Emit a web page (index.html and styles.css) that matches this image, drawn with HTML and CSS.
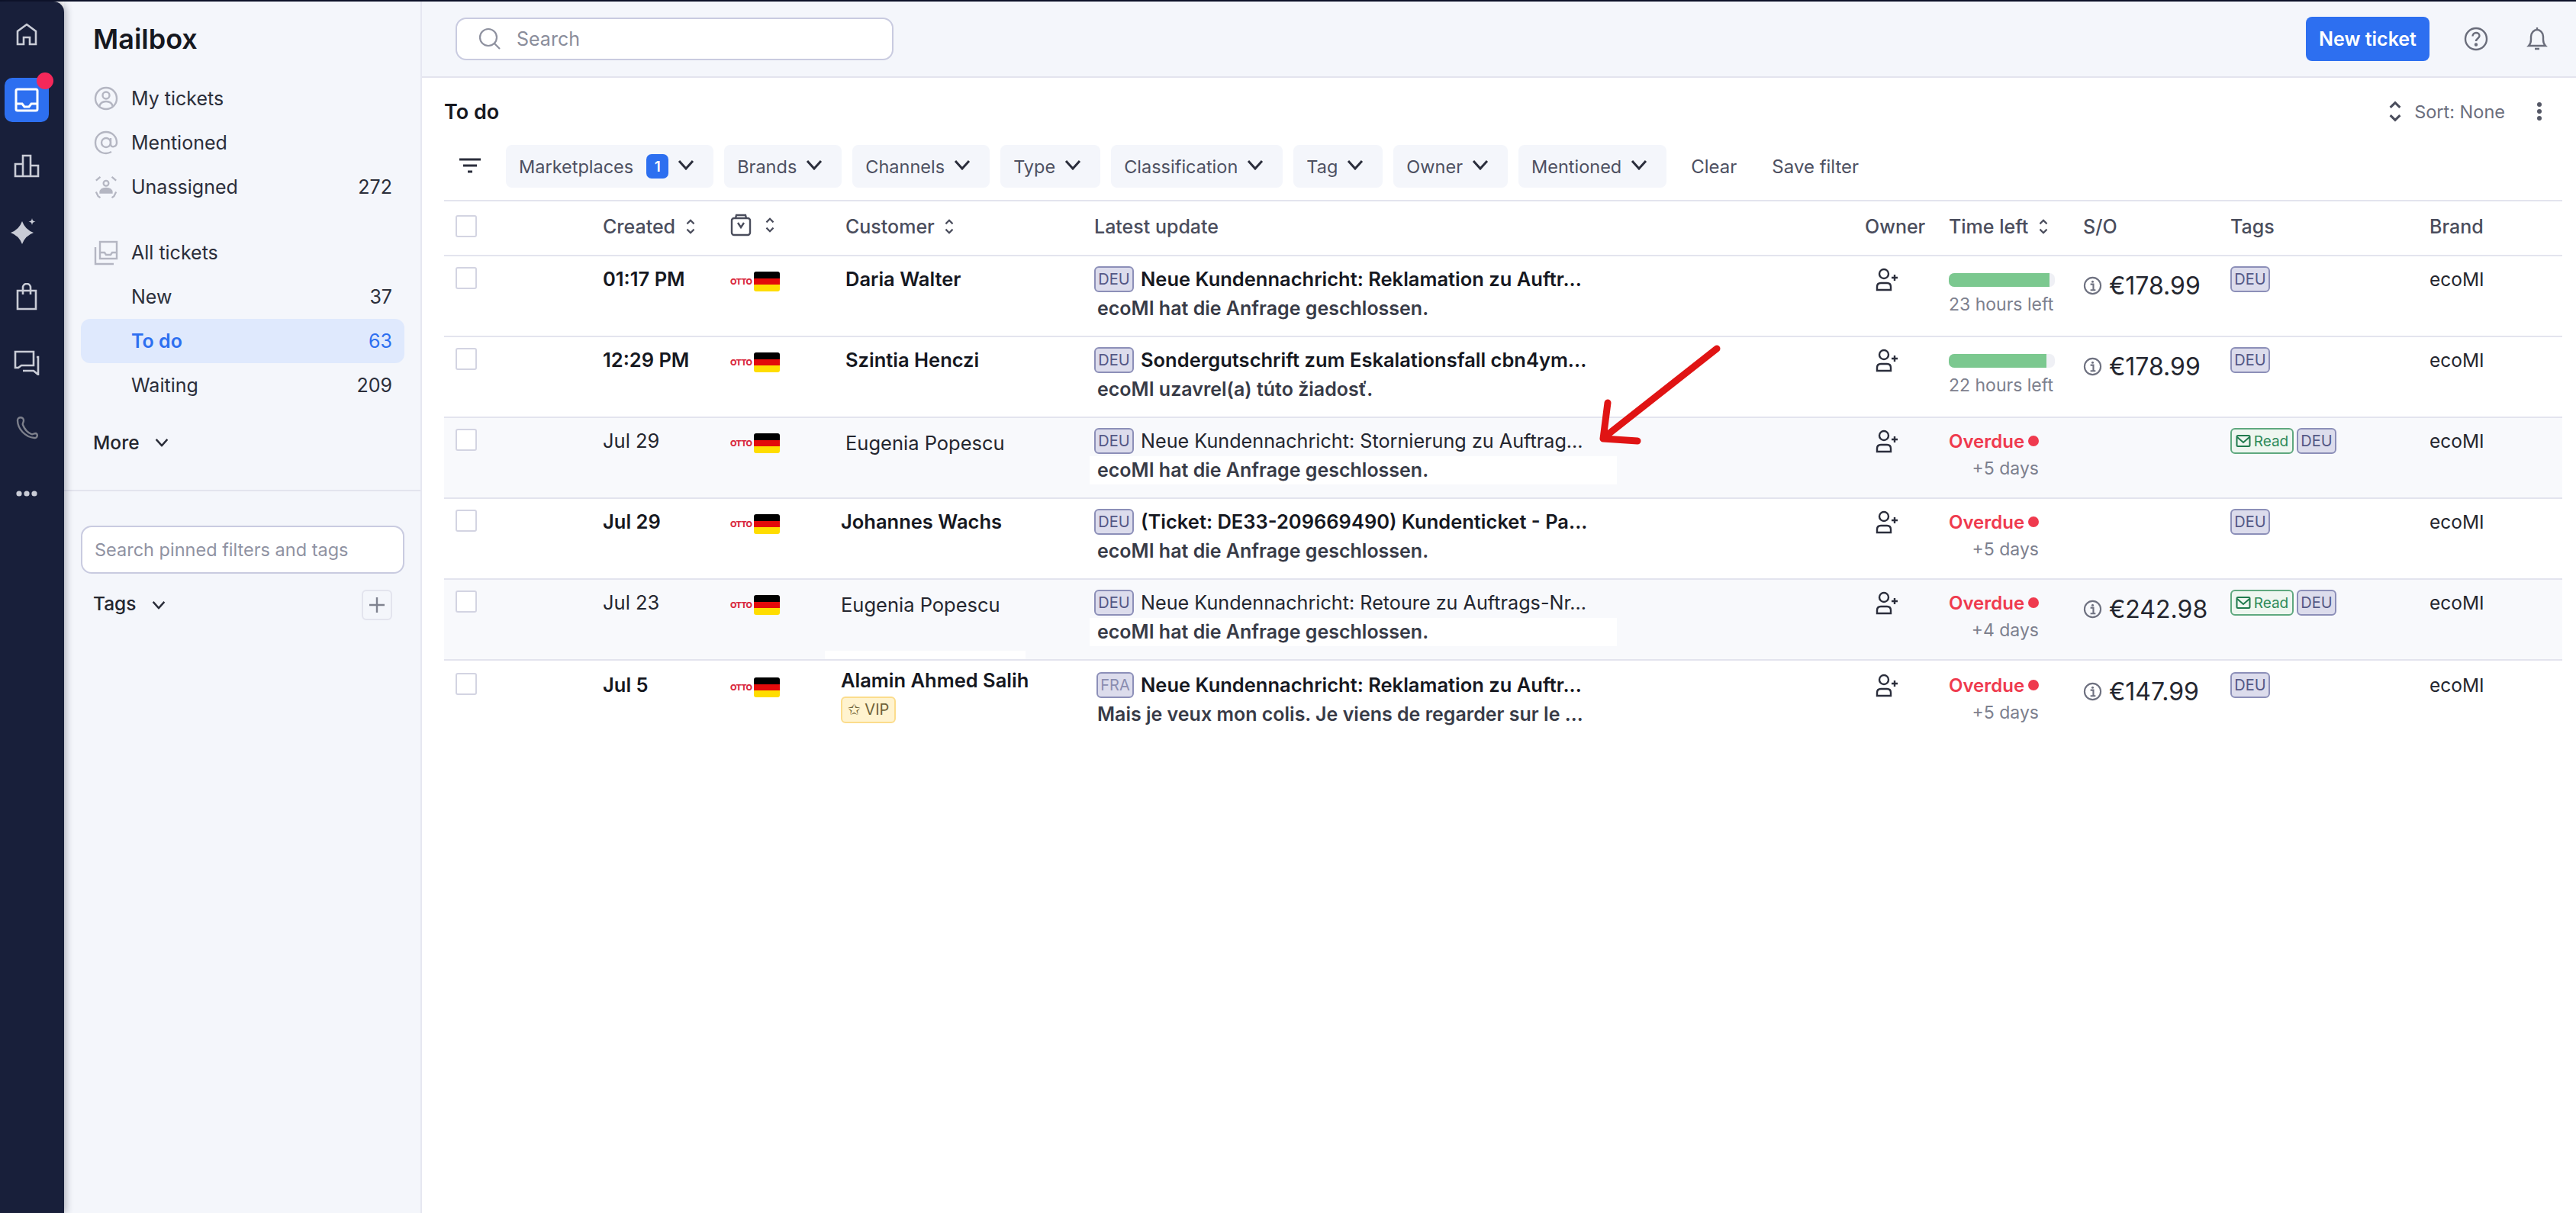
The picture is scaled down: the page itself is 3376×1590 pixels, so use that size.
FILE: index.html
```html
<!DOCTYPE html>
<html lang="en">
<head>
    <meta charset="UTF-8">
    <title>Mailbox</title>
    <link rel="stylesheet" href="styles.css">
</head>
<body>
    <svg class="sprites" width="0" height="0">
        <symbol id="chev" viewBox="0 0 22 14"><path d="M2 2l9 10 9-10" fill="none" stroke="currentColor" stroke-width="3"/></symbol>
        <symbol id="sort" viewBox="0 0 14 22"><path d="M2 7l5-5 5 5M2 15l5 5 5-5" fill="none" stroke="currentColor" stroke-width="2.4"/></symbol>
        <symbol id="user-plus" viewBox="0 0 32 32"><g fill="none" stroke="#2b2e3c" stroke-width="2.4"><circle cx="12" cy="8" r="6"/><path d="M3 29v-4c0-3 2-5 5-5h8c3 0 5 2 5 5v4z"/><path d="M26 9v8M22 13h8"/></g></symbol>
        <symbol id="info" viewBox="0 0 26 26"><circle cx="13" cy="13" r="11" fill="none" stroke="#6e7180" stroke-width="2.2"/><path d="M10 11h4v7M10 19h7" fill="none" stroke="#6e7180" stroke-width="2.2"/><circle cx="13" cy="7.5" r="1.6" fill="#6e7180"/></symbol>
        <symbol id="mail-check" viewBox="0 0 20 20"><rect x="1.5" y="3" width="17" height="14" rx="1.5" fill="none" stroke="#1f7a4d" stroke-width="2"/><path d="M2 5l8 7 8-7" fill="none" stroke="#1f7a4d" stroke-width="2"/></symbol>
    </svg>

    <div class="app">
        <nav class="rail">
            <a class="rail-item">
                <svg width="30" height="32" viewBox="0 0 30 32" fill="none" stroke="currentColor" stroke-width="2.6"><path d="M3 29V12L15 3l12 9v17h-8v-9h-8v9z"/></svg>
            </a>
            <a class="rail-item active">
                <span class="rail-btn">
                    <svg width="32" height="32" viewBox="0 0 32 32" fill="none" stroke="#fff" stroke-width="3"><rect x="2" y="2" width="28" height="28" rx="2"/><path d="M2 21h8l3 4h6l3-4h8"/></svg>
                    <span class="rail-dot"></span>
                </span>
            </a>
            <a class="rail-item">
                <svg width="34" height="32" viewBox="0 0 34 32" fill="none" stroke="currentColor" stroke-width="2.6"><path d="M2 30V14h10v16zM12 30V3h10v27zM22 30V16h10v14z"/></svg>
            </a>
            <a class="rail-item sparkle">
                <svg width="34" height="34" viewBox="0 0 34 34" fill="currentColor"><path d="M15 4Q19 15 30 19 19 23 15 34 11 23 0 19 11 15 15 4z"/><path d="M28 0c.5 3 1.500 4 4.500 4.500-3 .5-4 1.500-4.500 4.500-.5-3-1.500-4-4.500-4.500 3-.5 4-1.500 4.500-4.500z"/></svg>
            </a>
            <a class="rail-item">
                <svg width="28" height="36" viewBox="0 0 28 36" fill="none" stroke="currentColor" stroke-width="2.600"><path d="M2 10h24v24H2z"/><path d="M9 15V6a5 5 0 0 1 10 0v9"/></svg>
            </a>
            <a class="rail-item">
                <svg width="34" height="34" viewBox="0 0 34 34" fill="none" stroke="currentColor" stroke-width="2.600"><path d="M2 3h24v18H10l-4 3H2z"/><path d="M30 10h2v23l-6-5H12"/></svg>
            </a>
            <a class="rail-item dim">
                <svg width="30" height="32" viewBox="0 0 30 32" fill="none" stroke="currentColor" stroke-width="2.400"><path d="M3 6c0-5 8-5 8 0 0 3-2 4-1 6 2 5 6 10 11 12 2 1 3-1 6-1 3 1 2 7-2 6C13 28 3 17 3 6z"/></svg>
            </a>
            <a class="rail-item">
                <svg width="30" height="10" viewBox="0 0 30 10" fill="currentColor"><circle cx="5" cy="5" r="3.600"/><circle cx="15" cy="5" r="3.600"/><circle cx="25" cy="5" r="3.600"/></svg>
            </a>
        </nav>

        <aside class="sidebar">
            <h1 class="side-title">Mailbox</h1>
            <div class="side-item">
                <svg class="side-icon" viewBox="0 0 32 34" fill="none" stroke="#b4b6c2" stroke-width="2.400"><circle cx="16" cy="17" r="14"/><circle cx="16" cy="13" r="4.500"/><path d="M7 28c1-5 5-7 9-7s8 2 9 7"/></svg>
                <span>My tickets</span>
            </div>
            <div class="side-item">
                <svg class="side-icon" viewBox="0 0 32 34" fill="none" stroke="#b4b6c2" stroke-width="2.400"><circle cx="16" cy="17" r="6"/><path d="M22 11v8c0 5 8 4 8-2 0-8-6-14-14-14S2 9 2 17s6 14 14 14c3 0 5-1 7-2"/></svg>
                <span>Mentioned</span>
            </div>
            <div class="side-item">
                <svg class="side-icon" viewBox="0 0 34 34" fill="none" stroke="#b4b6c2" stroke-width="2.400"><path d="M9 3L3 8M25 3l6 5M3 24l3 6 3 2M31 24l-3 6-3 2"/><circle cx="17" cy="12" r="3.600"/><path d="M9 25c0-5 3-6 8-6s8 1 8 6z" fill="#b4b6c2"/></svg>
                <span>Unassigned</span>
                <span class="side-count">272</span>
            </div>
            <div class="side-item side-gap">
                <svg class="side-icon" viewBox="0 0 32 34" fill="none" stroke="#b4b6c2" stroke-width="2.400"><rect x="8" y="3" width="22" height="22"/><path d="M8 17h6l2 3h6l2-3h6"/><path d="M2 10v22h24"/></svg>
                <span>All tickets</span>
            </div>
            <div class="side-item side-sub"><span>New</span><span class="side-count">37</span></div>
            <div class="side-item side-sub current"><span>To do</span><span class="side-count">63</span></div>
            <div class="side-item side-sub"><span>Waiting</span><span class="side-count">209</span></div>
            <div class="side-toggle side-more">
                <span>More</span>
                <svg class="side-chev" viewBox="0 0 22 14"><use href="#chev"/></svg>
            </div>
            <div class="side-divider"></div>
            <div class="side-search">Search pinned filters and tags</div>
            <div class="side-toggle side-tags">
                <span class="side-tags-label">Tags</span>
                <svg class="side-chev" viewBox="0 0 22 14"><use href="#chev"/></svg>
                <span class="side-plus">
                    <svg width="22" height="22" viewBox="0 0 22 22" stroke="#7f828f" stroke-width="2.400"><path d="M11 1v20M1 11h20"/></svg>
                </span>
            </div>
        </aside>

        <main class="main">
            <header class="topbar">
                <div class="search">
                    <svg width="30" height="30" viewBox="0 0 30 30" fill="none" stroke="#8e919f" stroke-width="2.200"><circle cx="13" cy="13" r="11"/><path d="M21 21l7 7"/></svg>
                    <span>Search</span>
                </div>
                <button class="new-ticket">New ticket</button>
                <svg class="top-help" width="32" height="32" viewBox="0 0 32 32" fill="none" stroke="#6a6d7b" stroke-width="2.400"><circle cx="16" cy="16" r="14"/><path d="M11.500 12.500c0-6 9-6 9-.5 0 3-4.500 3.500-4.500 7"/><circle cx="16" cy="23.500" r="1" fill="#6a6d7b"/></svg>
                <svg class="top-bell" width="28" height="32" viewBox="0 0 28 32" fill="none" stroke="#6a6d7b" stroke-width="2.400"><path d="M3 25c2-2 3-4 3-8v-4c0-5 4-9 8-9s8 4 8 9v4c0 4 1 6 3 8z"/><path d="M14 1v3M11 29h6"/></svg>
            </header>

            <section class="content">
                <div class="heading">
                    <h2>To do</h2>
                    <div class="sort">
                        <svg width="18" height="28" viewBox="0 0 14 22" color="#4a4d5c"><use href="#sort"/></svg>
                        <span>Sort: None</span>
                    </div>
                    <svg class="more-v" width="8" height="26" viewBox="0 0 8 26" fill="#555866"><circle cx="4" cy="4" r="3"/><circle cx="4" cy="13" r="3"/><circle cx="4" cy="22" r="3"/></svg>
                </div>

                <div class="filters">
                    <svg class="filter-icon" width="28" height="22" viewBox="0 0 28 22" stroke="#2b2e3c" stroke-width="3"><path d="M0 2h28M5 10h18M11 18h6"/></svg>
                    <div class="chip">Marketplaces <b class="chip-count">1</b><svg class="chip-chev" viewBox="0 0 22 14"><use href="#chev"/></svg></div>
                    <div class="chip">Brands<svg class="chip-chev" viewBox="0 0 22 14"><use href="#chev"/></svg></div>
                    <div class="chip">Channels<svg class="chip-chev" viewBox="0 0 22 14"><use href="#chev"/></svg></div>
                    <div class="chip">Type<svg class="chip-chev" viewBox="0 0 22 14"><use href="#chev"/></svg></div>
                    <div class="chip">Classification<svg class="chip-chev" viewBox="0 0 22 14"><use href="#chev"/></svg></div>
                    <div class="chip">Tag<svg class="chip-chev" viewBox="0 0 22 14"><use href="#chev"/></svg></div>
                    <div class="chip">Owner<svg class="chip-chev" viewBox="0 0 22 14"><use href="#chev"/></svg></div>
                    <div class="chip">Mentioned<svg class="chip-chev" viewBox="0 0 22 14"><use href="#chev"/></svg></div>
                    <span class="filter-link">Clear</span>
                    <span class="filter-link">Save filter</span>
                </div>

                <div class="table">
                    <div class="table-head">
                        <span class="check"></span>
                        <span class="th">Created <svg class="th-sort" viewBox="0 0 14 22"><use href="#sort"/></svg></span>
                        <span class="th th-shop">
                            <svg width="28" height="30" viewBox="0 0 28 30" fill="none" stroke="#4a4d5c" stroke-width="2.400"><rect x="2" y="6" width="24" height="22" rx="3"/><path d="M7 6l1-4h12l1 4M10 12l4 6 4-6"/></svg>
                            <svg class="th-sort" viewBox="0 0 14 22"><use href="#sort"/></svg>
                        </span>
                        <span class="th">Customer <svg class="th-sort" viewBox="0 0 14 22"><use href="#sort"/></svg></span>
                        <span class="th">Latest update</span>
                        <span class="th">Owner</span>
                        <span class="th">Time left <svg class="th-sort" viewBox="0 0 14 22"><use href="#sort"/></svg></span>
                        <span class="th">S/O</span>
                        <span class="th">Tags</span>
                        <span class="th">Brand</span>
                    </div>

                    <div class="row unread">
                        <span class="check"></span>
                        <span class="created">01:17 PM</span>
                        <span class="market"><span class="otto">otto</span><span class="flag"></span></span>
                        <span class="customer">Daria Walter</span>
                        <div class="update">
                            <div class="subject"><span class="badge">DEU</span><span class="subject-text">Neue Kundennachricht: Reklamation zu Auftr...</span></div>
                            <div class="snippet">ecoMI hat die Anfrage geschlossen.</div>
                        </div>
                        <svg class="owner" viewBox="0 0 32 32"><use href="#user-plus"/></svg>
                        <div class="time">
                            <div class="progress"><span class="progress-fill" style="width:95%"></span></div>
                            <div class="time-left">23 hours left</div>
                        </div>
                        <div class="so"><svg class="info" viewBox="0 0 26 26"><use href="#info"/></svg>€178.99</div>
                        <div class="tags"><span class="badge">DEU</span></div>
                        <span class="brand">ecoMI</span>
                    </div>

                    <div class="row unread">
                        <span class="check"></span>
                        <span class="created">12:29 PM</span>
                        <span class="market"><span class="otto">otto</span><span class="flag"></span></span>
                        <span class="customer">Szintia Henczi</span>
                        <div class="update">
                            <div class="subject"><span class="badge">DEU</span><span class="subject-text">Sondergutschrift zum Eskalationsfall cbn4ym...</span></div>
                            <div class="snippet">ecoMI uzavrel(a) túto žiadosť.</div>
                        </div>
                        <svg class="owner" viewBox="0 0 32 32"><use href="#user-plus"/></svg>
                        <div class="time">
                            <div class="progress"><span class="progress-fill" style="width:92%"></span></div>
                            <div class="time-left">22 hours left</div>
                        </div>
                        <div class="so"><svg class="info" viewBox="0 0 26 26"><use href="#info"/></svg>€178.99</div>
                        <div class="tags"><span class="badge">DEU</span></div>
                        <span class="brand">ecoMI</span>
                    </div>

                    <div class="row read">
                        <span class="check"></span>
                        <span class="created">Jul 29</span>
                        <span class="market"><span class="otto">otto</span><span class="flag"></span></span>
                        <span class="customer lower">Eugenia Popescu</span>
                        <div class="update">
                            <div class="subject"><span class="badge">DEU</span><span class="subject-text">Neue Kundennachricht: Stornierung zu Auftrag...</span></div>
                            <div class="snippet">ecoMI hat die Anfrage geschlossen.</div>
                        </div>
                        <svg class="owner" viewBox="0 0 32 32"><use href="#user-plus"/></svg>
                        <div class="time">
                            <div class="overdue">Overdue <i class="overdue-dot"></i></div>
                            <div class="over-days">+5 days</div>
                        </div>
                        <div class="so"></div>
                        <div class="tags"><span class="badge badge-read"><svg width="20" height="20" viewBox="0 0 20 20"><use href="#mail-check"/></svg>Read</span><span class="badge">DEU</span></div>
                        <span class="brand">ecoMI</span>
                    </div>

                    <div class="row unread">
                        <span class="check"></span>
                        <span class="created">Jul 29</span>
                        <span class="market"><span class="otto">otto</span><span class="flag"></span></span>
                        <span class="customer shift">Johannes Wachs</span>
                        <div class="update">
                            <div class="subject"><span class="badge">DEU</span><span class="subject-text">(Ticket: DE33-209669490) Kundenticket - Pa...</span></div>
                            <div class="snippet">ecoMI hat die Anfrage geschlossen.</div>
                        </div>
                        <svg class="owner" viewBox="0 0 32 32"><use href="#user-plus"/></svg>
                        <div class="time">
                            <div class="overdue">Overdue <i class="overdue-dot"></i></div>
                            <div class="over-days">+5 days</div>
                        </div>
                        <div class="so"></div>
                        <div class="tags"><span class="badge">DEU</span></div>
                        <span class="brand">ecoMI</span>
                    </div>

                    <div class="row read">
                        <span class="check"></span>
                        <span class="created">Jul 23</span>
                        <span class="market"><span class="otto">otto</span><span class="flag"></span></span>
                        <span class="customer shift lower">Eugenia Popescu<i class="patch"></i></span>
                        <div class="update">
                            <div class="subject"><span class="badge">DEU</span><span class="subject-text">Neue Kundennachricht: Retoure zu Auftrags-Nr...</span></div>
                            <div class="snippet">ecoMI hat die Anfrage geschlossen.</div>
                        </div>
                        <svg class="owner" viewBox="0 0 32 32"><use href="#user-plus"/></svg>
                        <div class="time">
                            <div class="overdue">Overdue <i class="overdue-dot"></i></div>
                            <div class="over-days">+4 days</div>
                        </div>
                        <div class="so"><svg class="info" viewBox="0 0 26 26"><use href="#info"/></svg>€242.98</div>
                        <div class="tags"><span class="badge badge-read"><svg width="20" height="20" viewBox="0 0 20 20"><use href="#mail-check"/></svg>Read</span><span class="badge">DEU</span></div>
                        <span class="brand">ecoMI</span>
                    </div>

                    <div class="row unread last">
                        <span class="check"></span>
                        <span class="created">Jul 5</span>
                        <span class="market"><span class="otto">otto</span><span class="flag"></span></span>
                        <div class="customer shift vip-name">
                            Alamin Ahmed Salih
                            <span class="vip">✩ VIP</span>
                        </div>
                        <div class="update">
                            <div class="subject"><span class="badge badge-fra">FRA</span><span class="subject-text">Neue Kundennachricht: Reklamation zu Auftr...</span></div>
                            <div class="snippet">Mais je veux mon colis. Je viens de regarder sur le ...</div>
                        </div>
                        <svg class="owner" viewBox="0 0 32 32"><use href="#user-plus"/></svg>
                        <div class="time">
                            <div class="overdue">Overdue <i class="overdue-dot"></i></div>
                            <div class="over-days">+5 days</div>
                        </div>
                        <div class="so"><svg class="info" viewBox="0 0 26 26"><use href="#info"/></svg>€147.99</div>
                        <div class="tags"><span class="badge">DEU</span></div>
                        <span class="brand">ecoMI</span>
                    </div>
                </div>
            </section>
        </main>
    </div>

    <svg class="arrow" width="170" height="140" viewBox="2090 450 170 140" fill="none" stroke="#e01414" stroke-width="9" stroke-linecap="round" stroke-linejoin="round">
        <path d="M2250 457L2104 572M2107 528L2101 575L2146 578"/>
    </svg>
</body>
</html>
```

FILE: styles.css
```css
* {
    box-sizing: border-box;
}
body {
    margin: 0;
    height: 100vh;
    overflow: hidden;
    background: #fff;
    font-family: Inter, "Noto Sans", sans-serif;
    font-size: 25px;
    color: #24262f;
}
.sprites {
    position: absolute;
}
.app {
    display: flex;
    height: 100%;
    border-top: 2px solid #0c1128;
}

/* left rail */
.rail {
    width: 84px;
    flex: none;
    display: flex;
    flex-direction: column;
    padding-right: 14px;
    background: #181f3a;
    border-top-right-radius: 14px;
    box-shadow: 3px 0 10px rgba(30, 34, 60, 0.3);
    color: #c9ccd6;
    position: relative;
}
.rail-item {
    height: 86px;
    display: flex;
    align-items: center;
    justify-content: center;
}
.rail-item.dim {
    color: #7d808c;
}
.rail-item.sparkle {
    padding-right: 8px;
}
.rail-btn {
    position: relative;
    width: 58px;
    height: 58px;
    flex: none;
    display: flex;
    align-items: center;
    justify-content: center;
    background: #2d6ff0;
    border-radius: 10px;
}
.rail-dot {
    position: absolute;
    top: -7px;
    right: -6px;
    width: 22px;
    height: 22px;
    border-radius: 50%;
    background: #f5285a;
}

/* mailbox sidebar */
.sidebar {
    width: 469px;
    flex: none;
    padding: 0 21px 0 22px;
    background: #f4f6fb;
    border-right: 2px solid #e6e7f1;
}
.side-title {
    margin: 0;
    height: 98px;
    padding-left: 16px;
    display: flex;
    align-items: center;
    font-size: 36px;
    font-weight: 600;
    color: #16181f;
}
.side-item {
    height: 58px;
    display: flex;
    align-items: center;
    padding: 0 16px 0 17px;
    border-radius: 12px;
    color: #2b2e3a;
}
.side-icon {
    width: 32px;
    height: 34px;
    margin-right: 17px;
}
.side-count {
    margin-left: auto;
}
.side-gap {
    margin-top: 28px;
}
.side-sub {
    padding-left: 66px;
}
.side-sub.current {
    background: #dfe9fd;
    color: #2d6ff0;
    font-weight: 600;
}
.side-sub.current .side-count {
    font-weight: 400;
}
.side-toggle {
    display: flex;
    align-items: center;
    padding-left: 16px;
    font-size: 24.5px;
    font-weight: 500;
}
.side-more {
    height: 58px;
    margin-top: 17px;
}
.side-chev {
    width: 18px;
    height: 12px;
    margin-left: 20px;
    color: #2b2e3a;
}
.side-divider {
    height: 2px;
    margin: 33px -21px 45px -22px;
    background: #e3e4ee;
}
.side-search {
    height: 63px;
    display: flex;
    align-items: center;
    padding-left: 16px;
    background: #fff;
    border: 2px solid #c9cbe0;
    border-radius: 14px;
    font-size: 23.5px;
    color: #8f92a2;
}
.side-tags {
    height: 40px;
    margin-top: 21px;
}
.side-tags-label {
    margin-top: -5px;
}
.side-plus {
    margin-left: auto;
    margin-right: 16px;
    width: 40px;
    height: 40px;
    display: flex;
    align-items: center;
    justify-content: center;
    border: 2px solid #e3e4ee;
    border-radius: 6px;
}

/* main column */
.main {
    flex: 1;
    min-width: 0;
}
.topbar {
    height: 100px;
    display: flex;
    align-items: center;
    padding: 0 0 0 44px;
    background: #f4f6fb;
    border-bottom: 2px solid #e3e4ee;
}
.search {
    width: 574px;
    height: 56px;
    display: flex;
    align-items: center;
    gap: 20px;
    padding-left: 28px;
    background: #fff;
    border: 2px solid #c9cbe0;
    border-radius: 14px;
    font-size: 25px;
    color: #8a8d9b;
}
.new-ticket {
    margin-left: auto;
    width: 162px;
    height: 58px;
    border: 0;
    border-radius: 8px;
    background: #2d6ff0;
    color: #fff;
    font-family: inherit;
    font-size: 25px;
    font-weight: 600;
}
.top-help {
    margin-left: 45px;
}
.top-bell {
    margin: 0 37px 0 50px;
}
.content {
    padding: 0 18px 0 29px;
}
.heading {
    height: 88px;
    display: flex;
    align-items: center;
}
.heading h2 {
    margin: 0;
    font-size: 27px;
    font-weight: 600;
    color: #16181f;
}
.sort {
    margin-left: auto;
    display: flex;
    align-items: center;
    gap: 16px;
    font-size: 23.5px;
    color: #6b6e7d;
}
.more-v {
    margin: 0 26px 0 41px;
}

/* filter chips */
.filters {
    height: 56px;
    display: flex;
    align-items: center;
    gap: 14px;
}
.filter-icon {
    margin: 0 19px 0 20px;
}
.chip {
    height: 56px;
    display: flex;
    align-items: center;
    padding: 0 25px 0 17px;
    background: #f4f6fb;
    border-radius: 8px;
    font-size: 23.5px;
    color: #4d5061;
}
.chip-count {
    width: 29px;
    height: 32px;
    margin-left: 17px;
    display: flex;
    align-items: center;
    justify-content: center;
    background: #2d6ff0;
    border-radius: 7px;
    color: #fff;
    font-size: 19px;
    font-weight: 600;
}
.chip-chev {
    width: 22px;
    height: 14px;
    margin: -4px 0 0 12px;
    color: #2b2e3c;
}
.filter-link {
    margin-left: 18px;
    font-size: 24px;
    color: #4d5061;
}
.filter-link + .filter-link {
    margin-left: 32px;
}

/* ticket table */
.table {
    margin-top: 16px;
}
.table-head,
.row {
    display: grid;
    grid-template-columns: 208px 167px 151px 326px 1010px 110px 176px 193px 261px 174px;
    border-bottom: 2px solid #e3e4ee;
}
.table-head {
    height: 74px;
    padding-bottom: 5px;
    align-items: center;
    border-top: 2px solid #e3e4ee;
}
.row {
    height: 106px;
    padding-top: 13px;
    align-items: start;
}
.row.read {
    background: #f8f9fc;
}
.row.last {
    padding-top: 15px;
    border-bottom: 0;
}
.th {
    display: flex;
    align-items: center;
    font-size: 25px;
    font-weight: 500;
    color: #4a4d5c;
    white-space: pre;
}
.th-sort {
    width: 14px;
    height: 20px;
    margin-left: 6px;
    color: #4a4d5c;
}
.th-shop {
    margin-top: -4px;
}
.th-shop .th-sort {
    margin-left: 17px;
}
.check {
    width: 28px;
    height: 29px;
    margin-left: 15px;
    background: #fff;
    border: 2px solid #d3d4e2;
    border-radius: 3px;
}
.row .check {
    margin-top: 1px;
}
.created,
.customer,
.brand,
.subject {
    line-height: 34px;
}
.created {
    font-size: 25.5px;
}
.unread .created,
.unread .customer {
    font-weight: 600;
    color: #16181f;
}
.market {
    display: flex;
    align-items: center;
    gap: 7px;
    height: 34px;
    margin-top: 3px;
}
.otto {
    width: 24px;
    font-size: 11px;
    font-weight: 800;
    letter-spacing: -0.7px;
    text-transform: uppercase;
    color: #d9293f;
}
.flag {
    width: 34px;
    height: 26px;
    border-radius: 3px;
    background: linear-gradient(#000 33%, #e30a0a 33%, #e30a0a 66%, #ffdd00 66%);
}
.customer {
    position: relative;
    font-size: 25.5px;
}
.customer.shift {
    margin-left: -6px;
}
.customer.lower {
    padding-top: 3px;
}
.patch {
    position: absolute;
    top: 80px;
    left: -21px;
    width: 263px;
    height: 11px;
    background: #fff;
}
.vip-name {
    margin-top: -6px;
    margin-left: -8px;
}
.vip {
    display: block;
    width: 72px;
    height: 35px;
    margin-top: 4px;
    background: #fff3cf;
    border: 2px solid #fbdc8c;
    border-radius: 6px;
    font-size: 20px;
    font-weight: 400;
    line-height: 31px;
    text-align: center;
    color: #6f6238;
}
.subject {
    display: flex;
    align-items: center;
    height: 34px;
    white-space: nowrap;
}
.subject-text {
    margin-left: 9px;
    font-size: 25.2px;
}
.unread .subject-text {
    font-size: 25.5px;
    font-weight: 600;
    color: #16181f;
}
.snippet {
    width: 691px;
    height: 37px;
    margin: 3px 0 0 -6px;
    padding-left: 10px;
    font-size: 25px;
    font-weight: 600;
    line-height: 37px;
    color: #383b47;
}
.read .snippet {
    background: #fff;
}
.badge {
    display: inline-flex;
    align-items: center;
    justify-content: center;
    width: 52px;
    height: 34px;
    flex: none;
    background: #dcdcec;
    border: 2px solid #8c8fb8;
    border-radius: 6px;
    font-size: 20px;
    color: #545886;
}
.badge-fra {
    width: 49px;
    margin-left: 3px;
    color: #8a8db0;
}
.badge-read {
    width: 83px;
    gap: 4px;
    background: #eef6f0;
    border-color: #5fa87f;
    color: #2d8a5a;
    font-size: 19px;
}
.owner {
    width: 32px;
    height: 32px;
    margin-left: 13px;
    margin-top: 2px;
}
.progress {
    width: 139px;
    height: 18px;
    margin-top: 9px;
    background: #eff0f5;
    border-radius: 7px;
    overflow: hidden;
}
.progress-fill {
    display: block;
    height: 100%;
    background: #7bc88f;
}
.time-left {
    width: 139px;
    margin-top: 9px;
    font-size: 23px;
    line-height: 28px;
    white-space: nowrap;
    color: #7d808e;
}
.time {
    width: 118px;
    font-size: 23px;
}
.overdue {
    display: flex;
    align-items: center;
    justify-content: space-between;
    height: 34px;
    font-size: 24px;
    font-weight: 600;
    color: #ef3a4e;
    white-space: nowrap;
}
.overdue-dot {
    width: 14px;
    height: 14px;
    flex: none;
    border-radius: 50%;
    background: #ef3a4e;
}
.over-days {
    margin-top: 2px;
    line-height: 34px;
    text-align: right;
    color: #7d808e;
}
.so {
    display: flex;
    align-items: center;
    gap: 9px;
    height: 34px;
    margin-top: 8px;
    font-size: 32px;
    color: #24262f;
}
.info {
    width: 25px;
    height: 25px;
}
.tags {
    display: flex;
    gap: 4px;
}
.brand {
    font-size: 24.5px;
}
.arrow {
    position: absolute;
    left: 2090px;
    top: 450px;
}
```
